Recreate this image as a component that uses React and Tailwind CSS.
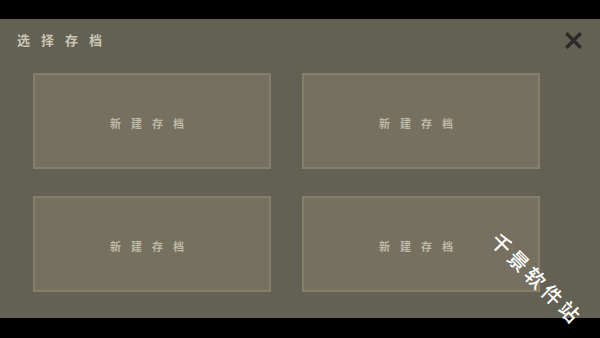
export default function App() {
  const slots = [1, 2, 3, 4];

  return (
    <div
      className="relative h-[338px] w-[600px] overflow-hidden bg-black flex flex-col"
      style={{ fontFamily: '"Noto Sans CJK SC", "Noto Sans", sans-serif' }}
    >
      <div className="h-[19px] shrink-0" />

      <div className="h-[299px] shrink-0 bg-[#636054] flex flex-col">
        <div className="h-[54px] flex justify-between items-start pl-[17px] pr-[18px] pt-[13px]">
          <h2 className="text-[13px] leading-[16px] font-bold tracking-[11px] text-[#c9c5b1]">
            选择存档
          </h2>
          <button className="w-[17px] h-[17px] flex items-center justify-center">
            <svg width="17" height="17" viewBox="0 0 17 17">
              <path
                d="M2.5 2.5 L14.5 14.5 M14.5 2.5 L2.5 14.5"
                stroke="#2a2a26"
                strokeWidth="3.4"
                strokeLinecap="square"
              />
            </svg>
          </button>
        </div>

        <div className="ml-[33px] grid grid-cols-[238px_238px] gap-x-[31px] gap-y-[27px]">
          {slots.map((slot) => (
            <div
              key={slot}
              className="h-[96px] bg-[#757060] border-2 border-[#85806c] flex items-center justify-center"
            >
              <span className="mt-[4px] text-[11px] leading-[14px] font-bold tracking-[10px] text-[#bdb9a5]">
                新建存档
              </span>
            </div>
          ))}
        </div>
      </div>

      <div className="flex-1" />

      <div className="absolute left-[537px] top-[279px] -translate-x-1/2 -translate-y-1/2 rotate-45 whitespace-nowrap text-[20px] leading-[22px] font-medium tracking-[4px] text-white">
        千景软件站
      </div>
    </div>
  );
}
